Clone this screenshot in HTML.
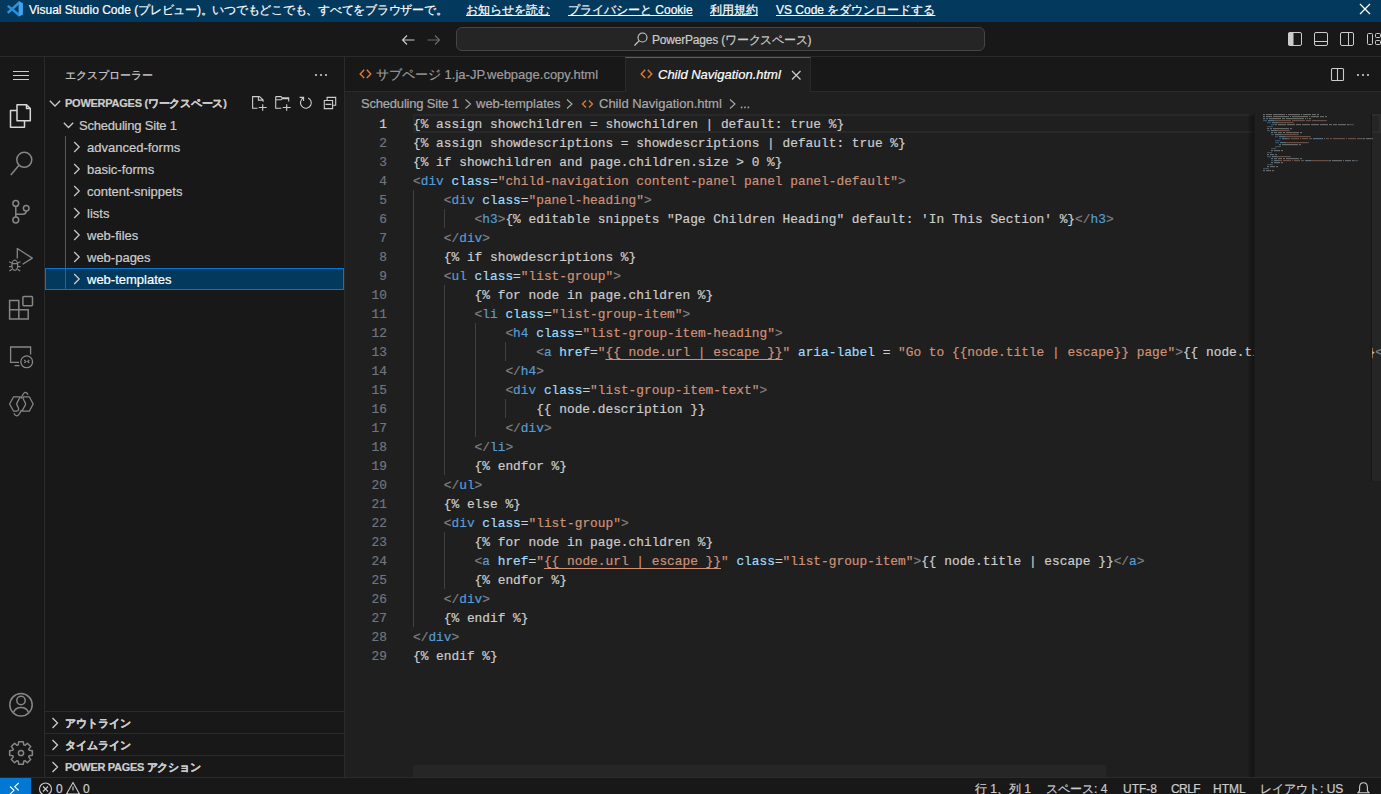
<!DOCTYPE html>
<html><head><meta charset="utf-8">
<style>
*{box-sizing:border-box;margin:0;padding:0}
html,body{-webkit-text-stroke:0.2px;width:1381px;height:794px;overflow:hidden;background:#181818;font-family:"Liberation Sans",sans-serif;color:#ccc}
.a{position:absolute}
.lk{text-decoration:underline;text-decoration-skip-ink:none;line-height:16px;margin-top:-1px}
#banner{left:0;top:0;width:1381px;height:22px;background:#04395e;color:#fff;font-size:12px;white-space:nowrap}
#titlebar{left:0;top:22px;width:1381px;height:35px;background:#181818;border-bottom:1px solid #2b2b2b}
#activity{left:0;top:57px;width:45px;height:720px;background:#181818;border-right:1px solid #2b2b2b}
#sidebar{left:45px;top:57px;width:300px;height:720px;background:#181818;border-right:1px solid #2b2b2b}
#tabs{left:345px;top:57px;width:1036px;height:35px;background:#181818;border-bottom:1px solid #2b2b2b}
#editor{left:345px;top:92px;width:1036px;height:685px;background:#1f1f1f}
#status{left:0;top:777px;width:1381px;height:17px;background:#181818;border-top:1px solid #2b2b2b;overflow:hidden;font-size:12px;white-space:nowrap}
.code{font-family:"Liberation Mono",monospace;font-size:12.83px;white-space:pre;line-height:19px;color:#ccc}
.tr{font-size:13px;line-height:15px;color:#cccccc;white-space:nowrap}
.sh{font-size:11px;font-weight:bold;line-height:14px;color:#cccccc;white-space:nowrap}
.bc{font-size:13px;line-height:15px;color:#a9a9a9;white-space:nowrap}
.st{top:4px;font-size:12px;line-height:15px;color:#cccccc;white-space:nowrap}
.gd{width:1px;background:#404040}
.ln{line-height:19px}
.t{color:#569cd6}.b{color:#808080}.at{color:#9cdcfe}.s{color:#ce9178}.u{text-decoration:underline;text-decoration-skip-ink:none;text-underline-offset:3px}
</style></head><body>
<div id="banner" class="a">
<svg class="a" style="left:0;top:0" width="30" height="22" viewBox="0 0 30 22"><polygon points="6.9,12.1 8.7,13.7 18.8,4.6 18.8,1.2" fill="#3b8fcf"/><polygon points="6.9,6.6 8.7,5 18.8,13.1 18.8,16.6" fill="#2290e6"/><polygon points="18.6,1.1 22.9,3.2 22.9,14.6 18.6,16.7" fill="#3ba6f5"/></svg>
<div class="a" style="left:29px;top:2px;line-height:16px">Visual Studio Code (<span style="letter-spacing:-0.25px">プレビュー)。いつでもどこでも、すべてをブラウザーで。</span></div>
<div class="a lk" style="left:466px;top:3px">お知らせを読む</div>
<div class="a lk" style="left:568px;top:3px">プライバシーと Cookie</div>
<div class="a lk" style="left:710px;top:3px">利用規約</div>
<div class="a lk" style="left:776px;top:3px">VS Code をダウンロードする</div>
<svg class="a" style="left:1359px;top:3px" width="12" height="12" viewBox="0 0 12 12"><path d="M1 1L11 11M11 1L1 11" stroke="#fff" stroke-width="1.3"/></svg>
</div>
<div id="titlebar" class="a">
<svg class="a" style="left:400px;top:10px" width="16" height="16" viewBox="0 0 16 16"><path d="M2.5 8H14.5M7 3.5L2.5 8L7 12.5" fill="none" stroke="#cccccc" stroke-width="1.1"/></svg>
<svg class="a" style="left:426px;top:10px" width="16" height="16" viewBox="0 0 16 16"><path d="M1.5 8H13.5M9 3.5L13.5 8L9 12.5" fill="none" stroke="#6b6b6b" stroke-width="1.1"/></svg>
<div class="a" id="cc" style="left:456px;top:5px;width:529px;height:24px;border:1px solid #454545;border-radius:6px;background:#252525"></div>
<svg class="a" style="left:633px;top:9px" width="16" height="16" viewBox="0 0 16 16"><circle cx="9.5" cy="6.5" r="4.5" fill="none" stroke="#cccccc" stroke-width="1.1"/><path d="M6.3 9.7L1.5 14.5" stroke="#cccccc" stroke-width="1.2"/></svg>
<div class="a" style="left:652px;top:10px;font-size:12px;line-height:16px;color:#cccccc;letter-spacing:-0.2px">PowerPages (ワークスペース)</div>
<svg class="a" style="left:1287px;top:9px" width="16" height="16" viewBox="0 0 16 16"><rect x="1.5" y="1.5" width="13" height="13" rx="1.5" fill="none" stroke="#cccccc"/><rect x="1.5" y="1.5" width="5" height="13" fill="#cccccc"/></svg>
<svg class="a" style="left:1313px;top:9px" width="16" height="16" viewBox="0 0 16 16"><rect x="1.5" y="1.5" width="13" height="13" rx="1.5" fill="none" stroke="#cccccc"/><path d="M1.5 10.5H14.5" stroke="#cccccc"/></svg>
<svg class="a" style="left:1339px;top:9px" width="16" height="16" viewBox="0 0 16 16"><rect x="1.5" y="1.5" width="13" height="13" rx="1.5" fill="none" stroke="#cccccc"/><path d="M9.5 1.5V14.5" stroke="#cccccc"/></svg>
<svg class="a" style="left:1366px;top:9px" width="16" height="16" viewBox="0 0 16 16"><rect x="1.5" y="2.5" width="5" height="11" rx="1" fill="none" stroke="#cccccc"/><rect x="9.5" y="2.5" width="5" height="4" rx="1" fill="none" stroke="#cccccc"/><rect x="9.5" y="9.5" width="5" height="4" rx="1" fill="none" stroke="#cccccc"/></svg>
</div>
<div id="activity" class="a">
<svg class="a" style="left:0;top:0" width="44" height="721" viewBox="0 57 44 721" fill="none" stroke="#868686" stroke-width="1.5">
<path d="M13 71.5H29M13 75.5H29M13 79.5H29" stroke="#cccccc" stroke-width="1.1"/>
<g stroke="#d7d7d7" stroke-width="1.5" stroke-linejoin="round">
<path d="M17 104.8H26.5L30.3 108.6V120.7H17Z"/>
<path d="M26.5 104.8V108.6H30.3"/>
<path d="M17 110.6H10.5V127.2H24.5V120.7"/>
</g>
<circle cx="24.3" cy="159.8" r="7.5"/>
<path d="M19 165.2L10.8 175"/>
<circle cx="15.8" cy="203.4" r="2.9"/>
<circle cx="15.8" cy="220" r="2.9"/>
<circle cx="26.2" cy="208.2" r="2.8"/>
<path d="M15.8 206.3V217.1M26.2 211C26.2 213.2 24.8 214.2 22.6 214.2H15.8"/>
<path d="M17.3 258.6V248.5L32.3 258.1L22.6 264.2" stroke-width="1.3" stroke-linejoin="round"/>
<g stroke-width="1.25"><ellipse cx="14.8" cy="265.3" rx="2.9" ry="5.1"/><path d="M12 263.6H17.6M9.2 261.8L12 263M9 266.7H12M9.4 271L12 269.3M20.4 261.8L17.6 263M20.6 266.7H17.6M20.2 271L17.6 269.3"/></g>
<path d="M9.6 300.5H18.8V309.7H9.6ZM9.6 309.7H18.8V319H9.6ZM18.8 309.7H28.2V319H18.8Z"/>
<rect x="22.9" y="296.6" width="9.6" height="9.2" rx="1"/>
<g stroke-width="1.3"><path d="M30.6 354.5V347H10.6V362.4H19"/>
<path d="M14.5 365.6H19.5"/>
<circle cx="26.7" cy="361.8" r="5.9"/>
<path d="M24.3 360L25.9 361.5L24.3 363M29.3 360L27.7 361.5L29.3 363" stroke-width="1.1"/></g>
<g stroke-width="1.3" stroke-linejoin="round" stroke-linecap="round"><path d="M20.3 396.8H13.6L9.6 404L13.6 411.2H16.8C18.4 411.2 19.1 409.4 18.3 407.8L16.9 404.9C16.6 404.3 16.6 403.7 16.9 403.1Z"/><path d="M23.4 396.8H29.3L33.2 404L29.3 411.2H21.9L25.4 404.9C25.7 404.3 25.7 403.7 25.4 403.1L23.9 400.2C23.1 398.6 22.5 396.8 23.4 396.8"/><path d="M21.2 398.2C22.4 395.2 23.5 392.6 25.1 392.4C26.3 392.3 27.2 393.1 27.8 394.3M21.2 410.3C20 413.3 18.6 415.6 17 415.8C15.8 415.9 14.8 415 14.2 413.7"/></g>
<circle cx="21" cy="704.8" r="11.2"/>
<circle cx="21" cy="700.5" r="4.2"/>
<path d="M13.5 712.5C15 708.5 18 707.5 21 707.5C24 707.5 27 708.5 28.5 712.5"/>
<path d="M29.16 750.29L32.37 750.70L32.37 755.30L29.16 755.71L28.69 756.86L30.67 759.41L27.41 762.67L24.86 760.69L23.71 761.16L23.30 764.37L18.70 764.37L18.29 761.16L17.14 760.69L14.59 762.67L11.33 759.41L13.31 756.86L12.84 755.71L9.63 755.30L9.63 750.70L12.84 750.29L13.31 749.14L11.33 746.59L14.59 743.33L17.14 745.31L18.29 744.84L18.70 741.63L23.30 741.63L23.71 744.84L24.86 745.31L27.41 743.33L30.67 746.59L28.69 749.14Z" stroke-linejoin="round"/>
<circle cx="21" cy="753" r="2.6"/>
</svg>
</div>

<div id="sidebar" class="a">
<div class="a" style="left:20px;top:11px;font-size:11px;line-height:14px;color:#cccccc">エクスプローラー</div>
<svg class="a" style="left:268px;top:15px" width="16" height="6" viewBox="0 0 16 6"><circle cx="3" cy="3" r="1.1" fill="#cccccc"/><circle cx="8" cy="3" r="1.1" fill="#cccccc"/><circle cx="13" cy="3" r="1.1" fill="#cccccc"/></svg>
<svg class="a" style="left:0;top:0" width="300" height="721" viewBox="45 57 300 721" fill="none" stroke="#cccccc" stroke-width="1.3">
<path d="M49.8 100.8L55 106L60.2 100.8"/>
<path d="M63.8 122.8L68.5 127.5L73.2 122.8"/>
<g stroke="#c5c5c5">
<path d="M74.2 142L79.2 147L74.2 152"/>
<path d="M74.2 164L79.2 169L74.2 174"/>
<path d="M74.2 186L79.2 191L74.2 196"/>
<path d="M74.2 208L79.2 213L74.2 218"/>
<path d="M74.2 230L79.2 235L74.2 240"/>
<path d="M74.2 252L79.2 257L74.2 262"/>
</g>
<g stroke-width="1.1">
<path d="M259.6 96.6H252.6V108.3H257.4M259.6 96.6L263.1 100.1V101.8M258.4 96.6V100.1H263.1M258.7 107.5H266.7M262.7 104.2V110.8"/>
<path d="M275.7 96.6H281L282 97.7H288.7V101.6M275.7 96.6V108.3H281.3M275.7 99.8H281L282 98.8H288.7M282.7 107.5H290.7M286.7 104.2V110.8"/>
<path d="M308.18 97.91A5.4 5.4 0 1 1 301.48 99.70L303.6 97.4M299.6 97.4H303.6V101"/>
<path d="M327.1 100.3V97.4H335.7V105.3H332.6M324.3 100.5H332.6V108.6H324.3ZM325.5 104.4H331.4"/>
</g>
<path d="M52.5 718L57.5 723L52.5 728M52.5 740L57.5 745L52.5 750M52.5 762L57.5 767L52.5 772"/>
</svg>
<div class="a" style="left:20px;top:39px;font-size:11px;font-weight:bold;line-height:14px;color:#cccccc;letter-spacing:-0.25px">POWERPAGES (ワークスペース)</div>
<div class="a" style="left:20px;top:79px;width:1px;height:154px;background:#585858"></div>
<div class="a tr" style="left:34px;top:61px;letter-spacing:-0.2px">Scheduling Site 1</div>
<div class="a tr" style="left:42px;top:83px">advanced-forms</div>
<div class="a tr" style="left:42px;top:105px">basic-forms</div>
<div class="a tr" style="left:42px;top:127px">content-snippets</div>
<div class="a tr" style="left:42px;top:149px">lists</div>
<div class="a tr" style="left:42px;top:171px">web-files</div>
<div class="a tr" style="left:42px;top:193px">web-pages</div>
<div class="a" style="left:0;top:211px;width:299px;height:22px;background:#04395e;border:1px solid #0078d4"></div>
<div class="a" style="left:20px;top:212px;width:1px;height:21px;background:#585858"></div>
<svg class="a" style="left:0;top:211px" width="300" height="22" viewBox="45 268 300 22" fill="none" stroke="#cccccc" stroke-width="1.3"><path d="M74.2 274L79.2 279L74.2 284"/></svg>
<div class="a tr" style="left:42px;top:215px;color:#ffffff">web-templates</div>
<div class="a" style="left:0;top:654px;width:299px;height:1px;background:#2b2b2b"></div>
<div class="a" style="left:0;top:676px;width:299px;height:1px;background:#2b2b2b"></div>
<div class="a" style="left:0;top:698px;width:299px;height:1px;background:#2b2b2b"></div>
<div class="a sh" style="left:20px;top:659px">アウトライン</div>
<div class="a sh" style="left:20px;top:681px">タイムライン</div>
<div class="a sh" style="left:20px;top:703px;letter-spacing:-0.3px">POWER PAGES アクション</div>
</div>

<div id="tabs" class="a">
<div class="a" style="left:280px;top:0;width:186px;height:35px;background:#1f1f1f;border-left:1px solid #2b2b2b;border-right:1px solid #2b2b2b;border-top:1px solid #0078d4"></div>
<svg class="a" style="left:0;top:0" width="1036" height="35" viewBox="345 57 1036 35" fill="none" stroke-width="1.5">
<path d="M364.2 69.8L360.2 73.9L364.2 78M366.8 69.8L370.8 73.9L366.8 78" stroke="#e37933" stroke-width="1.4"/>
<path d="M645.2 69.8L641.2 73.9L645.2 78M647.8 69.8L651.8 73.9L647.8 78" stroke="#e37933" stroke-width="1.4"/>
<path d="M792 71L800.5 79.5M800.5 71L792 79.5" stroke="#cccccc" stroke-width="1.3"/>
<rect x="1331.5" y="68.5" width="12" height="12" rx="1" stroke="#cccccc" stroke-width="1.1"/>
<path d="M1337.5 68.5V80.5" stroke="#cccccc" stroke-width="1.1"/>
</svg>
<svg class="a" style="left:1010px;top:15px" width="16" height="6" viewBox="0 0 16 6"><circle cx="3" cy="3" r="1.1" fill="#cccccc"/><circle cx="8" cy="3" r="1.1" fill="#cccccc"/><circle cx="13" cy="3" r="1.1" fill="#cccccc"/></svg>
<div class="a" style="left:31px;top:10px;font-size:13px;line-height:15px;color:#9d9d9d">サブページ 1.ja-JP.webpage.copy.html</div>
<div class="a" style="left:313px;top:10px;font-size:13px;line-height:15px;color:#ffffff;font-style:italic">Child Navigation.html</div>
</div>

<div id="editor" class="a">
<div class="a bc" style="left:16px;top:4px;letter-spacing:-0.2px">Scheduling Site 1</div>
<div class="a bc" style="left:131px;top:4px">web-templates</div>
<div class="a bc" style="left:254px;top:4px">Child Navigation.html</div>

<svg class="a" style="left:0;top:0" width="420" height="22" viewBox="345 92 420 22" fill="none" stroke="#a9a9a9" stroke-width="1.1">
<path d="M465.5 99.5L470.5 104L465.5 108.5M567 99.5L572 104L567 108.5M730 99.5L735 104L730 108.5"/>
<g fill="#a9a9a9" stroke="none"><rect x="740.8" y="106.6" width="1.6" height="1.6"/><rect x="744.2" y="106.6" width="1.6" height="1.6"/><rect x="747.6" y="106.6" width="1.6" height="1.6"/></g>
<path d="M586 100.5L582.5 104L586 107.5M589 100.5L592.5 104L589 107.5" stroke="#e37933" stroke-width="1.3"/>
</svg>

<div class="a" style="left:68px;top:22px;width:968px;height:19px;border:2px solid #282828"></div>
<div class="a code ln" style="left:0.5px;top:23px;width:41.5px;text-align:right;color:#6e7681"><span style="color:#cccccc">1</span>
2
3
4
5
6
7
8
9
10
11
12
13
14
15
16
17
18
19
20
21
22
23
24
25
26
27
28
29</div>
<div class="a" style="left:68px;top:22px">
<div class="a gd" style="left:0px;top:76px;height:437px"></div>
<div class="a gd" style="left:31px;top:95px;height:19px"></div>
<div class="a gd" style="left:31px;top:171px;height:190px"></div>
<div class="a gd" style="left:31px;top:418px;height:57px"></div>
<div class="a gd" style="left:62px;top:209px;height:114px"></div>
<div class="a gd" style="left:92px;top:228px;height:19px"></div>
<div class="a gd" style="left:92px;top:285px;height:19px"></div>
</div>
<div class="a code" style="left:68px;top:23px">{% assign showchildren = showchildren | default: true %}
{% assign showdescriptions = showdescriptions | default: true %}
{% if showchildren and page.children.size &gt; 0 %}
<span class="b">&lt;</span><span class="t">div</span> <span class="at">class</span>=<span class="s">"child-navigation content-panel panel panel-default"</span><span class="b">&gt;</span>
    <span class="b">&lt;</span><span class="t">div</span> <span class="at">class</span>=<span class="s">"panel-heading"</span><span class="b">&gt;</span>
        <span class="b">&lt;</span><span class="t">h3</span><span class="b">&gt;</span>{% editable snippets "Page Children Heading" default: 'In This Section' %}<span class="b">&lt;/</span><span class="t">h3</span><span class="b">&gt;</span>
    <span class="b">&lt;/</span><span class="t">div</span><span class="b">&gt;</span>
    {% if showdescriptions %}
    <span class="b">&lt;</span><span class="t">ul</span> <span class="at">class</span>=<span class="s">"list-group"</span><span class="b">&gt;</span>
        {% for node in page.children %}
        <span class="b">&lt;</span><span class="t">li</span> <span class="at">class</span>=<span class="s">"list-group-item"</span><span class="b">&gt;</span>
            <span class="b">&lt;</span><span class="t">h4</span> <span class="at">class</span>=<span class="s">"list-group-item-heading"</span><span class="b">&gt;</span>
                <span class="b">&lt;</span><span class="t">a</span> <span class="at">href</span>=<span class="s">"<span class="u">{{ node.url | escape }}</span>"</span> <span class="at">aria-label</span> = <span class="s">"Go to {{node.title | escape}} page"</span><span class="b">&gt;</span>{{ node.title | escape }}<span class="b">&lt;/</span><span class="t">a</span><span class="b">&gt;</span>
            <span class="b">&lt;/</span><span class="t">h4</span><span class="b">&gt;</span>
            <span class="b">&lt;</span><span class="t">div</span> <span class="at">class</span>=<span class="s">"list-group-item-text"</span><span class="b">&gt;</span>
                {{ node.description }}
            <span class="b">&lt;/</span><span class="t">div</span><span class="b">&gt;</span>
        <span class="b">&lt;/</span><span class="t">li</span><span class="b">&gt;</span>
        {% endfor %}
    <span class="b">&lt;/</span><span class="t">ul</span><span class="b">&gt;</span>
    {% else %}
    <span class="b">&lt;</span><span class="t">div</span> <span class="at">class</span>=<span class="s">"list-group"</span><span class="b">&gt;</span>
        {% for node in page.children %}
        <span class="b">&lt;</span><span class="t">a</span> <span class="at">href</span>=<span class="s">"<span class="u">{{ node.url | escape }}</span>"</span> <span class="at">class</span>=<span class="s">"list-group-item"</span><span class="b">&gt;</span>{{ node.title | escape }}<span class="b">&lt;/</span><span class="t">a</span><span class="b">&gt;</span>
        {% endfor %}
    <span class="b">&lt;/</span><span class="t">div</span><span class="b">&gt;</span>
    {% endif %}
<span class="b">&lt;/</span><span class="t">div</span><span class="b">&gt;</span>
{% endif %}</div>
<div class="a" style="left:68px;top:673px;width:693px;height:12px;background:#262626"></div>

<div class="a" style="left:902px;top:22px;width:7px;height:663px;background:linear-gradient(to right,rgba(0,0,0,0),rgba(0,0,0,0.42))"></div>
<div class="a" style="left:909px;top:22px;width:117.5px;height:663px;background:#1f1f1f;border-left:1px solid #1a1a1a">
<svg class="a" style="left:8px;top:0" width="110" height="60" viewBox="0 0 110 60" opacity="0.42"><rect x="0" y="0" width="2" height="1.2" fill="#cccccc"/><rect x="3" y="0" width="6" height="1.2" fill="#cccccc"/><rect x="10" y="0" width="12" height="1.2" fill="#cccccc"/><rect x="23" y="0" width="1" height="1.2" fill="#cccccc"/><rect x="25" y="0" width="12" height="1.2" fill="#cccccc"/><rect x="38" y="0" width="1" height="1.2" fill="#cccccc"/><rect x="40" y="0" width="8" height="1.2" fill="#cccccc"/><rect x="49" y="0" width="4" height="1.2" fill="#cccccc"/><rect x="54" y="0" width="2" height="1.2" fill="#cccccc"/><rect x="0" y="2" width="2" height="1.2" fill="#cccccc"/><rect x="3" y="2" width="6" height="1.2" fill="#cccccc"/><rect x="10" y="2" width="16" height="1.2" fill="#cccccc"/><rect x="27" y="2" width="1" height="1.2" fill="#cccccc"/><rect x="29" y="2" width="16" height="1.2" fill="#cccccc"/><rect x="46" y="2" width="1" height="1.2" fill="#cccccc"/><rect x="48" y="2" width="8" height="1.2" fill="#cccccc"/><rect x="57" y="2" width="4" height="1.2" fill="#cccccc"/><rect x="62" y="2" width="2" height="1.2" fill="#cccccc"/><rect x="0" y="4" width="2" height="1.2" fill="#cccccc"/><rect x="3" y="4" width="2" height="1.2" fill="#cccccc"/><rect x="6" y="4" width="12" height="1.2" fill="#cccccc"/><rect x="19" y="4" width="3" height="1.2" fill="#cccccc"/><rect x="23" y="4" width="18" height="1.2" fill="#cccccc"/><rect x="42" y="4" width="1" height="1.2" fill="#cccccc"/><rect x="44" y="4" width="1" height="1.2" fill="#cccccc"/><rect x="46" y="4" width="2" height="1.2" fill="#cccccc"/><rect x="0" y="6" width="1" height="1.2" fill="#808080"/><rect x="1" y="6" width="3" height="1.2" fill="#569cd6"/><rect x="5" y="6" width="5" height="1.2" fill="#9cdcfe"/><rect x="10" y="6" width="1" height="1.2" fill="#cccccc"/><rect x="11" y="6" width="17" height="1.2" fill="#ce9178"/><rect x="29" y="6" width="13" height="1.2" fill="#ce9178"/><rect x="43" y="6" width="5" height="1.2" fill="#ce9178"/><rect x="49" y="6" width="14" height="1.2" fill="#ce9178"/><rect x="63" y="6" width="1" height="1.2" fill="#808080"/><rect x="4" y="8" width="1" height="1.2" fill="#808080"/><rect x="5" y="8" width="3" height="1.2" fill="#569cd6"/><rect x="9" y="8" width="5" height="1.2" fill="#9cdcfe"/><rect x="14" y="8" width="1" height="1.2" fill="#cccccc"/><rect x="15" y="8" width="15" height="1.2" fill="#ce9178"/><rect x="30" y="8" width="1" height="1.2" fill="#808080"/><rect x="8" y="10" width="1" height="1.2" fill="#808080"/><rect x="9" y="10" width="2" height="1.2" fill="#569cd6"/><rect x="11" y="10" width="1" height="1.2" fill="#808080"/><rect x="12" y="10" width="2" height="1.2" fill="#cccccc"/><rect x="15" y="10" width="8" height="1.2" fill="#cccccc"/><rect x="24" y="10" width="8" height="1.2" fill="#cccccc"/><rect x="33" y="10" width="5" height="1.2" fill="#cccccc"/><rect x="39" y="10" width="8" height="1.2" fill="#cccccc"/><rect x="48" y="10" width="8" height="1.2" fill="#cccccc"/><rect x="57" y="10" width="8" height="1.2" fill="#cccccc"/><rect x="66" y="10" width="3" height="1.2" fill="#cccccc"/><rect x="70" y="10" width="4" height="1.2" fill="#cccccc"/><rect x="75" y="10" width="8" height="1.2" fill="#cccccc"/><rect x="84" y="10" width="2" height="1.2" fill="#cccccc"/><rect x="86" y="10" width="2" height="1.2" fill="#808080"/><rect x="88" y="10" width="2" height="1.2" fill="#569cd6"/><rect x="90" y="10" width="1" height="1.2" fill="#808080"/><rect x="4" y="12" width="2" height="1.2" fill="#808080"/><rect x="6" y="12" width="3" height="1.2" fill="#569cd6"/><rect x="9" y="12" width="1" height="1.2" fill="#808080"/><rect x="4" y="14" width="2" height="1.2" fill="#cccccc"/><rect x="7" y="14" width="2" height="1.2" fill="#cccccc"/><rect x="10" y="14" width="16" height="1.2" fill="#cccccc"/><rect x="27" y="14" width="2" height="1.2" fill="#cccccc"/><rect x="4" y="16" width="1" height="1.2" fill="#808080"/><rect x="5" y="16" width="2" height="1.2" fill="#569cd6"/><rect x="8" y="16" width="5" height="1.2" fill="#9cdcfe"/><rect x="13" y="16" width="1" height="1.2" fill="#cccccc"/><rect x="14" y="16" width="12" height="1.2" fill="#ce9178"/><rect x="26" y="16" width="1" height="1.2" fill="#808080"/><rect x="8" y="18" width="2" height="1.2" fill="#cccccc"/><rect x="11" y="18" width="3" height="1.2" fill="#cccccc"/><rect x="15" y="18" width="4" height="1.2" fill="#cccccc"/><rect x="20" y="18" width="2" height="1.2" fill="#cccccc"/><rect x="23" y="18" width="13" height="1.2" fill="#cccccc"/><rect x="37" y="18" width="2" height="1.2" fill="#cccccc"/><rect x="8" y="20" width="1" height="1.2" fill="#808080"/><rect x="9" y="20" width="2" height="1.2" fill="#569cd6"/><rect x="12" y="20" width="5" height="1.2" fill="#9cdcfe"/><rect x="17" y="20" width="1" height="1.2" fill="#cccccc"/><rect x="18" y="20" width="17" height="1.2" fill="#ce9178"/><rect x="35" y="20" width="1" height="1.2" fill="#808080"/><rect x="12" y="22" width="1" height="1.2" fill="#808080"/><rect x="13" y="22" width="2" height="1.2" fill="#569cd6"/><rect x="16" y="22" width="5" height="1.2" fill="#9cdcfe"/><rect x="21" y="22" width="1" height="1.2" fill="#cccccc"/><rect x="22" y="22" width="25" height="1.2" fill="#ce9178"/><rect x="47" y="22" width="1" height="1.2" fill="#808080"/><rect x="16" y="24" width="1" height="1.2" fill="#808080"/><rect x="17" y="24" width="1" height="1.2" fill="#569cd6"/><rect x="19" y="24" width="4" height="1.2" fill="#9cdcfe"/><rect x="23" y="24" width="1" height="1.2" fill="#cccccc"/><rect x="24" y="24" width="3" height="1.2" fill="#ce9178"/><rect x="28" y="24" width="8" height="1.2" fill="#ce9178"/><rect x="37" y="24" width="1" height="1.2" fill="#ce9178"/><rect x="39" y="24" width="6" height="1.2" fill="#ce9178"/><rect x="46" y="24" width="3" height="1.2" fill="#ce9178"/><rect x="50" y="24" width="10" height="1.2" fill="#9cdcfe"/><rect x="61" y="24" width="1" height="1.2" fill="#cccccc"/><rect x="63" y="24" width="3" height="1.2" fill="#ce9178"/><rect x="67" y="24" width="2" height="1.2" fill="#ce9178"/><rect x="70" y="24" width="12" height="1.2" fill="#ce9178"/><rect x="83" y="24" width="1" height="1.2" fill="#ce9178"/><rect x="85" y="24" width="8" height="1.2" fill="#ce9178"/><rect x="94" y="24" width="5" height="1.2" fill="#ce9178"/><rect x="99" y="24" width="1" height="1.2" fill="#808080"/><rect x="100" y="24" width="2" height="1.2" fill="#cccccc"/><rect x="103" y="24" width="10" height="1.2" fill="#cccccc"/><rect x="114" y="24" width="1" height="1.2" fill="#cccccc"/><rect x="116" y="24" width="6" height="1.2" fill="#cccccc"/><rect x="123" y="24" width="2" height="1.2" fill="#cccccc"/><rect x="125" y="24" width="2" height="1.2" fill="#808080"/><rect x="127" y="24" width="1" height="1.2" fill="#569cd6"/><rect x="128" y="24" width="1" height="1.2" fill="#808080"/><rect x="12" y="26" width="2" height="1.2" fill="#808080"/><rect x="14" y="26" width="2" height="1.2" fill="#569cd6"/><rect x="16" y="26" width="1" height="1.2" fill="#808080"/><rect x="12" y="28" width="1" height="1.2" fill="#808080"/><rect x="13" y="28" width="3" height="1.2" fill="#569cd6"/><rect x="17" y="28" width="5" height="1.2" fill="#9cdcfe"/><rect x="22" y="28" width="1" height="1.2" fill="#cccccc"/><rect x="23" y="28" width="22" height="1.2" fill="#ce9178"/><rect x="45" y="28" width="1" height="1.2" fill="#808080"/><rect x="16" y="30" width="2" height="1.2" fill="#cccccc"/><rect x="19" y="30" width="16" height="1.2" fill="#cccccc"/><rect x="36" y="30" width="2" height="1.2" fill="#cccccc"/><rect x="12" y="32" width="2" height="1.2" fill="#808080"/><rect x="14" y="32" width="3" height="1.2" fill="#569cd6"/><rect x="17" y="32" width="1" height="1.2" fill="#808080"/><rect x="8" y="34" width="2" height="1.2" fill="#808080"/><rect x="10" y="34" width="2" height="1.2" fill="#569cd6"/><rect x="12" y="34" width="1" height="1.2" fill="#808080"/><rect x="8" y="36" width="2" height="1.2" fill="#cccccc"/><rect x="11" y="36" width="6" height="1.2" fill="#cccccc"/><rect x="18" y="36" width="2" height="1.2" fill="#cccccc"/><rect x="4" y="38" width="2" height="1.2" fill="#808080"/><rect x="6" y="38" width="2" height="1.2" fill="#569cd6"/><rect x="8" y="38" width="1" height="1.2" fill="#808080"/><rect x="4" y="40" width="2" height="1.2" fill="#cccccc"/><rect x="7" y="40" width="4" height="1.2" fill="#cccccc"/><rect x="12" y="40" width="2" height="1.2" fill="#cccccc"/><rect x="4" y="42" width="1" height="1.2" fill="#808080"/><rect x="5" y="42" width="3" height="1.2" fill="#569cd6"/><rect x="9" y="42" width="5" height="1.2" fill="#9cdcfe"/><rect x="14" y="42" width="1" height="1.2" fill="#cccccc"/><rect x="15" y="42" width="12" height="1.2" fill="#ce9178"/><rect x="27" y="42" width="1" height="1.2" fill="#808080"/><rect x="8" y="44" width="2" height="1.2" fill="#cccccc"/><rect x="11" y="44" width="3" height="1.2" fill="#cccccc"/><rect x="15" y="44" width="4" height="1.2" fill="#cccccc"/><rect x="20" y="44" width="2" height="1.2" fill="#cccccc"/><rect x="23" y="44" width="13" height="1.2" fill="#cccccc"/><rect x="37" y="44" width="2" height="1.2" fill="#cccccc"/><rect x="8" y="46" width="1" height="1.2" fill="#808080"/><rect x="9" y="46" width="1" height="1.2" fill="#569cd6"/><rect x="11" y="46" width="4" height="1.2" fill="#9cdcfe"/><rect x="15" y="46" width="1" height="1.2" fill="#cccccc"/><rect x="16" y="46" width="3" height="1.2" fill="#ce9178"/><rect x="20" y="46" width="8" height="1.2" fill="#ce9178"/><rect x="29" y="46" width="1" height="1.2" fill="#ce9178"/><rect x="31" y="46" width="6" height="1.2" fill="#ce9178"/><rect x="38" y="46" width="3" height="1.2" fill="#ce9178"/><rect x="42" y="46" width="5" height="1.2" fill="#9cdcfe"/><rect x="47" y="46" width="1" height="1.2" fill="#cccccc"/><rect x="48" y="46" width="17" height="1.2" fill="#ce9178"/><rect x="65" y="46" width="1" height="1.2" fill="#808080"/><rect x="66" y="46" width="2" height="1.2" fill="#cccccc"/><rect x="69" y="46" width="10" height="1.2" fill="#cccccc"/><rect x="80" y="46" width="1" height="1.2" fill="#cccccc"/><rect x="82" y="46" width="6" height="1.2" fill="#cccccc"/><rect x="89" y="46" width="2" height="1.2" fill="#cccccc"/><rect x="91" y="46" width="2" height="1.2" fill="#808080"/><rect x="93" y="46" width="1" height="1.2" fill="#569cd6"/><rect x="94" y="46" width="1" height="1.2" fill="#808080"/><rect x="8" y="48" width="2" height="1.2" fill="#cccccc"/><rect x="11" y="48" width="6" height="1.2" fill="#cccccc"/><rect x="18" y="48" width="2" height="1.2" fill="#cccccc"/><rect x="4" y="50" width="2" height="1.2" fill="#808080"/><rect x="6" y="50" width="3" height="1.2" fill="#569cd6"/><rect x="9" y="50" width="1" height="1.2" fill="#808080"/><rect x="4" y="52" width="2" height="1.2" fill="#cccccc"/><rect x="7" y="52" width="5" height="1.2" fill="#cccccc"/><rect x="13" y="52" width="2" height="1.2" fill="#cccccc"/><rect x="0" y="54" width="2" height="1.2" fill="#808080"/><rect x="2" y="54" width="3" height="1.2" fill="#569cd6"/><rect x="5" y="54" width="1" height="1.2" fill="#808080"/><rect x="0" y="56" width="2" height="1.2" fill="#cccccc"/><rect x="3" y="56" width="5" height="1.2" fill="#cccccc"/><rect x="9" y="56" width="2" height="1.2" fill="#cccccc"/></svg>
</div>
<div class="a" style="left:1027px;top:22px;width:9px;height:367px;background:rgba(121,121,121,0.08);box-shadow:-1px 0 1px rgba(0,0,0,0.25)"></div>
</div>

<div id="status" class="a">
<div class="a" style="left:0;top:0;width:31px;height:17px;background:#0078d4"></div>
<svg class="a" style="left:0;top:0" width="1381" height="17" viewBox="0 777 1381 17" fill="none" stroke="#ffffff" stroke-width="1.1">
<path d="M10 785.5L14 789.3L10 793.2M18.7 782L14.7 785.7L18.7 789.5"/>
<g stroke="#cccccc"><circle cx="45.5" cy="788" r="6"/><path d="M43 785.5L48 790.5M48 785.5L43 790.5"/>
<path d="M73 781.5L79.5 793H66.5Z M73 785.5V789.5"/>
<path d="M1363.5 781.8C1360.8 781.8 1359.6 784 1359.6 786.5V789.8L1358 791.8H1369L1367.4 789.8V786.5C1367.4 784 1366.2 781.8 1363.5 781.8Z M1362 793.8H1365"/></g>
</svg>
<div class="a st" style="left:56px">0</div>
<div class="a st" style="left:83px">0</div>
<div class="a st" style="left:975px">行 1、列 1</div>
<div class="a st" style="left:1046px">スペース: 4</div>
<div class="a st" style="left:1123px">UTF-8</div>
<div class="a st" style="left:1171px;letter-spacing:-0.6px">CRLF</div>
<div class="a st" style="left:1213px">HTML</div>
<div class="a st" style="left:1260px">レイアウト: US</div>
</div>

</body></html>
